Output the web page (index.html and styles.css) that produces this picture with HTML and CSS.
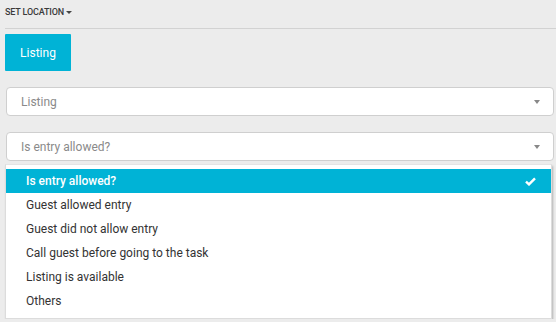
FILE: index.html
```html
<!DOCTYPE html>
<html lang="en">

<head>
    <meta charset="UTF-8">
    <meta name="viewport" content="width=device-width, initial-scale=1.0">
    <title>Task</title>
    <link rel="stylesheet" href="styles.css">
</head>

<body>
    <div class="top-bar">
        <span class="set-location">SET LOCATION <span class="caret"></span></span>
    </div>
    <div class="content">
        <button class="tab-button">Listing</button>
        <div class="select-box">
            <span>Listing</span>
            <span class="arrow"></span>
        </div>
        <div class="select-box">
            <span>Is entry allowed?</span>
            <span class="arrow"></span>
        </div>
        <ul class="dropdown">
            <li class="selected">
                Is entry allowed?
                <svg width="11" height="9" viewBox="0 0 11 9">
                    <path d="M1 4.6 L4 7.4 L10 1.4" fill="none" stroke="#fff" stroke-width="2.4" />
                </svg>
            </li>
            <li>Guest allowed entry</li>
            <li>Guest did not allow entry</li>
            <li>Call guest before going to the task</li>
            <li>Listing is available</li>
            <li>Others</li>
        </ul>
    </div>
</body>

</html>
```

FILE: styles.css
```css
body {
    font-family: Roboto, "Liberation Sans", sans-serif;
    margin: 0;
    padding: 0;
    background-color: #ececec;
    color: #333;
}

.top-bar {
    height: 28px;
    margin-left: 5px;
    border-bottom: 1px solid #d2d2d2;
    display: flex;
    align-items: center;
}

.set-location {
    font-size: 9px;
    font-weight: 500;
    color: #3a3a3a;
    display: flex;
    align-items: center;
    margin-top: -4px;
    letter-spacing: -0.15px;
}

.caret {
    display: inline-block;
    margin-left: 2px;
    border-left: 3px solid transparent;
    border-right: 3px solid transparent;
    border-top: 3px solid #444;
}

.content {
    padding: 5px 2px 0 5px;
}

.tab-button {
    display: block;
    width: 66px;
    height: 37px;
    background-color: #00b3d6;
    color: white;
    border: none;
    border-radius: 1px;
    font-family: inherit;
    font-size: 12px;
    padding: 0;
    margin-bottom: 16px;
}

.select-box {
    margin-left: 1px;
    height: 27px;
    background-color: white;
    border: 1px solid #cfcfcf;
    border-radius: 4px;
    display: flex;
    align-items: center;
    justify-content: space-between;
    padding: 0 13px 0 14px;
    font-size: 12px;
    color: #8a8a8a;
    margin-bottom: 16px;
}

.select-box:last-of-type {
    margin-bottom: 0;
}

.arrow {
    border-left: 3.5px solid transparent;
    border-right: 3.5px solid transparent;
    border-top: 4px solid #888;
}

.dropdown {
    list-style: none;
    margin: 3px 2px 0 0;
    padding: 4px 0 5px 0;
    background-color: white;
    border: 1px solid #dcdcdc;
    border-top-color: #e4e4e4;
    box-shadow: 1px 2px 2px rgba(0, 0, 0, 0.25);
}

.dropdown li {
    height: 24px;
    display: flex;
    align-items: center;
    justify-content: space-between;
    padding: 0 15px 0 20px;
    font-size: 12px;
    color: #333;
}

.dropdown li.selected {
    background-color: #00b3d6;
    color: white;
    font-weight: 500;
}
```
